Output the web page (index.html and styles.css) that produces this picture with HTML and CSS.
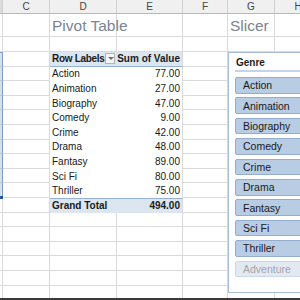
FILE: index.html
```html
<!DOCTYPE html>
<html>
	<head>
		<meta charset="UTF-8">
		<title> Pivot Table and Slicer </title>
		<link rel="stylesheet" href="styles.css">
	</head>
	<body>
		<div class="sheet">
			<div class="row hdr">
				<div class="cell sel"></div><div class="cell">C</div><div class="cell">D</div><div class="cell">E</div><div class="cell">F</div><div class="cell">G</div><div class="cell">H</div>
			</div>
			<div class="row title">
				<div class="cell"></div><div class="cell"></div><div class="cell">Pivot Table</div><div class="cell"></div><div class="cell"></div><div class="cell">Slicer</div><div class="cell"></div>
			</div>
			<div class="row">
				<div class="cell"></div><div class="cell"></div><div class="cell"></div><div class="cell"></div><div class="cell"></div><div class="cell"></div><div class="cell"></div>
			</div>
			<div class="row">
				<div class="cell blue top"></div><div class="cell"></div>
				<div class="cell pv pvhead lbl">Row Labels <span class="drop"></span></div>
				<div class="cell pv pvhead num">Sum of Value</div>
				<div class="cell"></div><div class="cell"></div><div class="cell"></div>
			</div>
			<div class="row"><div class="cell blue"></div><div class="cell"></div><div class="cell pv lbl">Action</div><div class="cell pv num">77.00</div><div class="cell"></div><div class="cell"></div><div class="cell"></div></div>
			<div class="row"><div class="cell blue"></div><div class="cell"></div><div class="cell pv lbl">Animation</div><div class="cell pv num">27.00</div><div class="cell"></div><div class="cell"></div><div class="cell"></div></div>
			<div class="row"><div class="cell blue"></div><div class="cell"></div><div class="cell pv lbl">Biography</div><div class="cell pv num">47.00</div><div class="cell"></div><div class="cell"></div><div class="cell"></div></div>
			<div class="row"><div class="cell blue"></div><div class="cell"></div><div class="cell pv lbl">Comedy</div><div class="cell pv num">9.00</div><div class="cell"></div><div class="cell"></div><div class="cell"></div></div>
			<div class="row"><div class="cell blue"></div><div class="cell"></div><div class="cell pv lbl">Crime</div><div class="cell pv num">42.00</div><div class="cell"></div><div class="cell"></div><div class="cell"></div></div>
			<div class="row"><div class="cell blue"></div><div class="cell"></div><div class="cell pv lbl">Drama</div><div class="cell pv num">48.00</div><div class="cell"></div><div class="cell"></div><div class="cell"></div></div>
			<div class="row"><div class="cell blue"></div><div class="cell"></div><div class="cell pv lbl">Fantasy</div><div class="cell pv num">89.00</div><div class="cell"></div><div class="cell"></div><div class="cell"></div></div>
			<div class="row"><div class="cell blue"></div><div class="cell"></div><div class="cell pv lbl">Sci Fi</div><div class="cell pv num">80.00</div><div class="cell"></div><div class="cell"></div><div class="cell"></div></div>
			<div class="row"><div class="cell blue last"><span class="handle"></span></div><div class="cell"></div><div class="cell pv lbl">Thriller</div><div class="cell pv num">75.00</div><div class="cell"></div><div class="cell"></div><div class="cell"></div></div>
			<div class="row">
				<div class="cell"></div><div class="cell"></div>
				<div class="cell pv pvtotal lbl">Grand Total</div>
				<div class="cell pv pvtotal num">494.00</div>
				<div class="cell"></div><div class="cell"></div><div class="cell"></div>
			</div>
			<div class="row"><div class="cell"></div><div class="cell"></div><div class="cell"></div><div class="cell"></div><div class="cell"></div><div class="cell"></div><div class="cell"></div></div>
			<div class="row"><div class="cell"></div><div class="cell"></div><div class="cell"></div><div class="cell"></div><div class="cell"></div><div class="cell"></div><div class="cell"></div></div>
			<div class="row"><div class="cell"></div><div class="cell"></div><div class="cell"></div><div class="cell"></div><div class="cell"></div><div class="cell"></div><div class="cell"></div></div>
			<div class="row"><div class="cell"></div><div class="cell"></div><div class="cell"></div><div class="cell"></div><div class="cell"></div><div class="cell"></div><div class="cell"></div></div>
			<div class="row"><div class="cell"></div><div class="cell"></div><div class="cell"></div><div class="cell"></div><div class="cell"></div><div class="cell"></div><div class="cell"></div></div>
			<div class="row"><div class="cell"></div><div class="cell"></div><div class="cell"></div><div class="cell"></div><div class="cell"></div><div class="cell"></div><div class="cell"></div></div>

			<div class="slicer">
				<div class="slicer-head">Genre</div>
				<div class="item">Action</div>
				<div class="item">Animation</div>
				<div class="item">Biography</div>
				<div class="item">Comedy</div>
				<div class="item">Crime</div>
				<div class="item">Drama</div>
				<div class="item">Fantasy</div>
				<div class="item">Sci Fi</div>
				<div class="item">Thriller</div>
				<div class="item off">Adventure</div>
			</div>
		</div>
		<div class="bottom-bar"></div>
	</body>
</html>
```

FILE: styles.css
```css
html, body{
	margin: 0;
	padding: 0;
	width: 300px;
	height: 300px;
	overflow: hidden;
	background: #ffffff;
}
.sheet{
	position: relative;
	height: 298px;
	overflow: hidden;
	font-family: "Liberation Sans", Arial, sans-serif;
	font-size: 10px;
	color: #1a1a1a;
}
.row{
	display: grid;
	grid-template-columns: 3px 47px 67px 66px 45px 47px 47px;
	height: 14.6px;
}
.cell{
	box-sizing: border-box;
	border-right: 1px solid #dadada;
	border-bottom: 1px solid #dadada;
	white-space: nowrap;
	display: flex;
	align-items: center;
	min-width: 0;
}

/* column letters */
.hdr{
	height: 14px;
	background: #f0f0f0;
}
.hdr .cell{
	justify-content: center;
	color: #444;
	border-right-color: #cfcfcf;
	border-bottom-color: #b8b8b8;
}
.hdr .sel{
	background: #dcdcdc;
}

.title{
	height: 23px;
}
.title .cell{
	font-size: 15.5px;
	color: #7b8494;
	overflow: visible;
	padding-left: 2px;
	padding-top: 2px;
}
.row:nth-child(3){
	height: 15px;
}

/* selected range in column B */
.blue{
	background: #d3e0f1;
	border-right: 1px solid #7d9ccb;
	border-bottom-color: #b5c7e2;
	position: relative;
}
.blue.top{
	border-top: 1px solid #7d9ccb;
}
.handle{
	position: absolute;
	right: -1px;
	bottom: -2px;
	width: 3px;
	height: 3px;
	background: #2f5597;
}

/* pivot table */
.pv{
	border-bottom: none;
	background: #ffffff;
}
.pv.lbl{
	border-right: none;
	padding-left: 2px;
}
.pv.num{
	justify-content: flex-end;
	padding-right: 2px;
}
.pvhead{
	background: #dce6f1;
	border-bottom: 1px solid #95b3d7;
	font-weight: bold;
}
.pvhead.lbl{
	letter-spacing: -0.3px;
}
.pvtotal{
	background: #dce6f1;
	border-top: 1px solid #95b3d7;
	font-weight: bold;
}
.drop{
	margin-left: auto;
	margin-right: 2px;
	width: 11px;
	height: 11px;
	box-sizing: border-box;
	border: 1px solid #b5b5b5;
	background: #f4f4f4;
	position: relative;
}
.drop::after{
	content: "";
	position: absolute;
	left: 2px;
	top: 3px;
	border-left: 3px solid transparent;
	border-right: 3px solid transparent;
	border-top: 3px solid #707070;
}

/* slicer window */
.slicer{
	position: absolute;
	left: 228px;
	top: 52px;
	width: 100px;
	height: 241px;
	box-sizing: border-box;
	background: #ffffff;
	border: 1px solid #a7bcdb;
	padding: 0 0 0 6px;
}
.slicer-head{
	height: 17px;
	line-height: 19px;
	font-weight: bold;
	border-bottom: 2px solid #c3d3e8;
	margin-bottom: 5px;
	padding-left: 1px;
}
.item{
	height: 16.6px;
	margin-bottom: 3.8px;
	box-sizing: border-box;
	background: #b8cce4;
	border: 1px solid #93acd0;
	border-radius: 2px;
	padding-left: 7px;
	display: flex;
	align-items: center;
	font-size: 10.5px;
	color: #1a1a1a;
}
.item.off{
	background: #e3e9f3;
	border-color: #ccd7e7;
	color: #a6a6a6;
}

.bottom-bar{
	height: 2px;
	background: #3a3a3a;
}
```
